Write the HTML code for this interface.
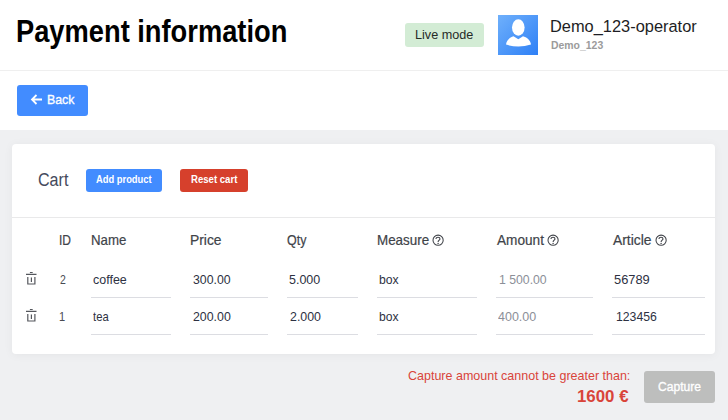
<!DOCTYPE html>
<html><head><meta charset="utf-8">
<style>
*{box-sizing:border-box;margin:0;padding:0}
html,body{width:728px;height:420px;overflow:hidden;background:#eff0f2;font-family:"Liberation Sans",sans-serif}
.abs{position:absolute}
.t{position:absolute;white-space:nowrap;line-height:1;transform-origin:0 0}
#header{position:absolute;left:0;top:0;width:728px;height:130px;background:#fff}
#hline{position:absolute;left:0;top:70px;width:728px;height:1px;background:#efefef}
#badgebox{left:405px;top:23px;width:79px;height:24px;background:#d3ecd5;border-radius:3px}
#avatar{left:498px;top:15px;width:40px;height:40px;background:linear-gradient(135deg,#6fb0fb 0%,#2e80f6 100%)}
#backbtn{left:17px;top:85px;width:71px;height:31px;background:#428cff;border-radius:3px}
#card{left:12px;top:144px;width:703px;height:210px;background:#fff;border-radius:4px;box-shadow:0 1px 10px rgba(0,0,0,0.05)}
#addbtn{left:86px;top:169px;width:76px;height:23px;background:#428cff;border-radius:3px}
#resetbtn{left:180px;top:169px;width:68px;height:23px;background:#d6402c;border-radius:3px}
#cline{left:12px;top:217px;width:703px;height:1px;background:#e9e9ea}
.ul{position:absolute;height:1px;background:#dcdde2}
#capbtn{left:644px;top:371px;width:71px;height:32px;background:#bdbebd;border-radius:3px}
</style></head><body>
<div id="header"></div>
<div id="hline"></div>
<div id="badgebox" class="abs"></div>
<div id="avatar" class="abs">
<svg width="40" height="40" viewBox="0 0 40 40"><ellipse cx="20.3" cy="12.5" rx="6.3" ry="8.2" fill="#fff"/><path d="M8 29.6 C8.5 25 12.5 22 15.5 21.2 L20.3 24.3 L25 21.2 C28.5 22 32.5 25 33 29.6 Q20.5 33.5 8 29.6 Z" fill="#fff"/></svg>
</div>
<div id="backbtn" class="abs">
<svg class="abs" style="left:13px;top:7.5px" width="13" height="13" viewBox="0 0 13 13"><path d="M12 6.5H2.5M6.5 2L2 6.5L6.5 11" stroke="#fff" stroke-width="1.8" fill="none"/></svg>
</div>
<div id="card" class="abs"></div>
<div id="addbtn" class="abs"></div>
<div id="resetbtn" class="abs"></div>
<div id="cline" class="abs"></div>

<!-- question icons -->
<svg class="abs" style="left:432px;top:234px" width="13" height="13" viewBox="0 0 13 13"><circle cx="6.1" cy="6.2" r="5.1" stroke="#404349" stroke-width="1.05" fill="none"/><path d="M4.0 5.0C4.0 3.8 4.9 3.2 6.0 3.2C7.2 3.2 8.0 3.9 8.0 4.9C8.0 6.1 6.1 6.3 6.1 7.9" stroke="#404349" stroke-width="1.1" fill="none"/><circle cx="6.1" cy="9.4" r="0.7" fill="#404349"/></svg>
<svg class="abs" style="left:546.5px;top:234px" width="13" height="13" viewBox="0 0 13 13"><circle cx="6.1" cy="6.2" r="5.1" stroke="#404349" stroke-width="1.05" fill="none"/><path d="M4.0 5.0C4.0 3.8 4.9 3.2 6.0 3.2C7.2 3.2 8.0 3.9 8.0 4.9C8.0 6.1 6.1 6.3 6.1 7.9" stroke="#404349" stroke-width="1.1" fill="none"/><circle cx="6.1" cy="9.4" r="0.7" fill="#404349"/></svg>
<svg class="abs" style="left:655px;top:234px" width="13" height="13" viewBox="0 0 13 13"><circle cx="6.1" cy="6.2" r="5.1" stroke="#404349" stroke-width="1.05" fill="none"/><path d="M4.0 5.0C4.0 3.8 4.9 3.2 6.0 3.2C7.2 3.2 8.0 3.9 8.0 4.9C8.0 6.1 6.1 6.3 6.1 7.9" stroke="#404349" stroke-width="1.1" fill="none"/><circle cx="6.1" cy="9.4" r="0.7" fill="#404349"/></svg>

<!-- trash icons -->
<svg class="abs" style="left:22px;top:268px" width="20" height="20" viewBox="0 0 20 20"><path d="M7.9 4.5H10.7M4 6.4H14.5M5.8 9V16H12.9V9M9.4 9.5V14" stroke="#55575d" stroke-width="1.2" fill="none"/></svg>
<svg class="abs" style="left:22px;top:305px" width="20" height="20" viewBox="0 0 20 20"><path d="M7.9 4.5H10.7M4 6.4H14.5M5.8 9V16H12.9V9M9.4 9.5V14" stroke="#55575d" stroke-width="1.2" fill="none"/></svg>

<!-- underlines -->
<div class="ul" style="left:91px;top:297px;width:80px"></div>
<div class="ul" style="left:190px;top:297px;width:78px"></div>
<div class="ul" style="left:287px;top:297px;width:71px"></div>
<div class="ul" style="left:377px;top:297px;width:100px"></div>
<div class="ul" style="left:496px;top:297px;width:97px"></div>
<div class="ul" style="left:612px;top:297px;width:93px"></div>
<div class="ul" style="left:91px;top:334px;width:80px"></div>
<div class="ul" style="left:190px;top:334px;width:78px"></div>
<div class="ul" style="left:287px;top:334px;width:71px"></div>
<div class="ul" style="left:377px;top:334px;width:100px"></div>
<div class="ul" style="left:496px;top:334px;width:97px"></div>
<div class="ul" style="left:612px;top:334px;width:93px"></div>

<div id="capbtn" class="abs"></div>
<div class="t" id="title" style="left:16.27px;top:16.00px;font-size:31.5px;font-weight:bold;color:#000;transform:scaleX(0.8660);">Payment information</div>
<div class="t" id="badge" style="left:415.05px;top:28.00px;font-size:13.3px;font-weight:normal;color:#262b27;transform:scaleX(0.9507);">Live mode</div>
<div class="t" id="uname" style="left:550.06px;top:18.00px;font-size:17.4px;font-weight:normal;color:#1e1e24;transform:scaleX(0.9428);">Demo_123-operator</div>
<div class="t" id="usub" style="left:551.00px;top:40.00px;font-size:11.2px;font-weight:bold;color:#9b9b9b;transform:scaleX(0.9328);">Demo_123</div>
<div class="t" id="back" style="left:47.00px;top:93.00px;font-size:13.7px;font-weight:normal;color:#fff;transform:scaleX(0.9025);-webkit-text-stroke:0.35px currentColor">Back</div>
<div class="t" id="cart" style="left:37.60px;top:171.00px;font-size:18px;font-weight:normal;color:#454a5c;transform:scaleX(0.8940);">Cart</div>
<div class="t" id="add" style="left:96.30px;top:175.00px;font-size:10.0px;font-weight:bold;color:#fff;transform:scaleX(0.9351);">Add product</div>
<div class="t" id="reset" style="left:190.50px;top:175.00px;font-size:10.0px;font-weight:bold;color:#fff;transform:scaleX(0.9586);">Reset cart</div>
<div class="t" id="hID" style="left:59.05px;top:233.00px;font-size:14.1px;font-weight:normal;color:#404349;transform:scaleX(0.8517);-webkit-text-stroke:0.2px currentColor">ID</div>
<div class="t" id="hName" style="left:90.56px;top:233.00px;font-size:14.1px;font-weight:normal;color:#404349;transform:scaleX(0.9386);-webkit-text-stroke:0.2px currentColor">Name</div>
<div class="t" id="hPrice" style="left:189.62px;top:233.00px;font-size:14.1px;font-weight:normal;color:#404349;transform:scaleX(0.9817);-webkit-text-stroke:0.2px currentColor">Price</div>
<div class="t" id="hQty" style="left:287.10px;top:233.00px;font-size:14.1px;font-weight:normal;color:#404349;transform:scaleX(0.8829);-webkit-text-stroke:0.2px currentColor">Qty</div>
<div class="t" id="hMeasure" style="left:376.75px;top:233.00px;font-size:14.1px;font-weight:normal;color:#404349;transform:scaleX(0.9501);-webkit-text-stroke:0.2px currentColor">Measure</div>
<div class="t" id="hAmount" style="left:496.50px;top:233.00px;font-size:14.1px;font-weight:normal;color:#404349;transform:scaleX(0.9660);-webkit-text-stroke:0.2px currentColor">Amount</div>
<div class="t" id="hArticle" style="left:612.70px;top:233.00px;font-size:14.1px;font-weight:normal;color:#404349;transform:scaleX(0.9843);-webkit-text-stroke:0.2px currentColor">Article</div>
<div class="t" id="r1id" style="left:59.60px;top:274.00px;font-size:12.9px;font-weight:normal;color:#484b52;transform:scaleX(0.8143);">2</div>
<div class="t" id="r1name" style="left:92.80px;top:274.00px;font-size:12.9px;font-weight:normal;color:#2d3142;transform:scaleX(0.9679);">coffee</div>
<div class="t" id="r1price" style="left:193.00px;top:274.00px;font-size:12.9px;font-weight:normal;color:#2d3142;transform:scaleX(0.9527);">300.00</div>
<div class="t" id="r1qty" style="left:289.10px;top:274.00px;font-size:12.9px;font-weight:normal;color:#2d3142;transform:scaleX(0.9692);">5.000</div>
<div class="t" id="r1meas" style="left:379.10px;top:274.00px;font-size:12.9px;font-weight:normal;color:#2d3142;transform:scaleX(0.9467);">box</div>
<div class="t" id="r1amt" style="left:498.80px;top:274.00px;font-size:12.9px;font-weight:normal;color:#8c8f98;transform:scaleX(0.9498);">1 500.00</div>
<div class="t" id="r1art" style="left:613.60px;top:274.00px;font-size:12.9px;font-weight:normal;color:#2d3142;transform:scaleX(0.9979);">56789</div>
<div class="t" id="r2id" style="left:59.20px;top:311.00px;font-size:12.9px;font-weight:normal;color:#484b52;transform:scaleX(0.8571);">1</div>
<div class="t" id="r2name" style="left:92.60px;top:311.00px;font-size:12.9px;font-weight:normal;color:#2d3142;transform:scaleX(0.8746);">tea</div>
<div class="t" id="r2price" style="left:192.90px;top:311.00px;font-size:12.9px;font-weight:normal;color:#2d3142;transform:scaleX(0.9578);">200.00</div>
<div class="t" id="r2qty" style="left:289.60px;top:311.00px;font-size:12.9px;font-weight:normal;color:#2d3142;transform:scaleX(0.9598);">2.000</div>
<div class="t" id="r2meas" style="left:378.90px;top:311.00px;font-size:12.9px;font-weight:normal;color:#2d3142;transform:scaleX(0.9420);">box</div>
<div class="t" id="r2amt" style="left:498.20px;top:311.00px;font-size:12.9px;font-weight:normal;color:#8c8f98;transform:scaleX(0.9680);">400.00</div>
<div class="t" id="r2art" style="left:615.50px;top:311.00px;font-size:12.9px;font-weight:normal;color:#2d3142;transform:scaleX(0.9499);">123456</div>
<div class="t" id="err" style="left:407.70px;top:370.00px;font-size:12.8px;font-weight:normal;color:#d9443a;transform:scaleX(0.9767);">Capture amount cannot be greater than:</div>
<div class="t" id="amt" style="left:576.60px;top:389.00px;font-size:16.8px;font-weight:bold;color:#d9443a;transform:scaleX(1.0040);">1600 €</div>
<div class="t" id="cap" style="left:657.80px;top:380.00px;font-size:13.7px;font-weight:normal;color:#fff;transform:scaleX(0.8818);-webkit-text-stroke:0.35px currentColor">Capture</div>
</body></html>
